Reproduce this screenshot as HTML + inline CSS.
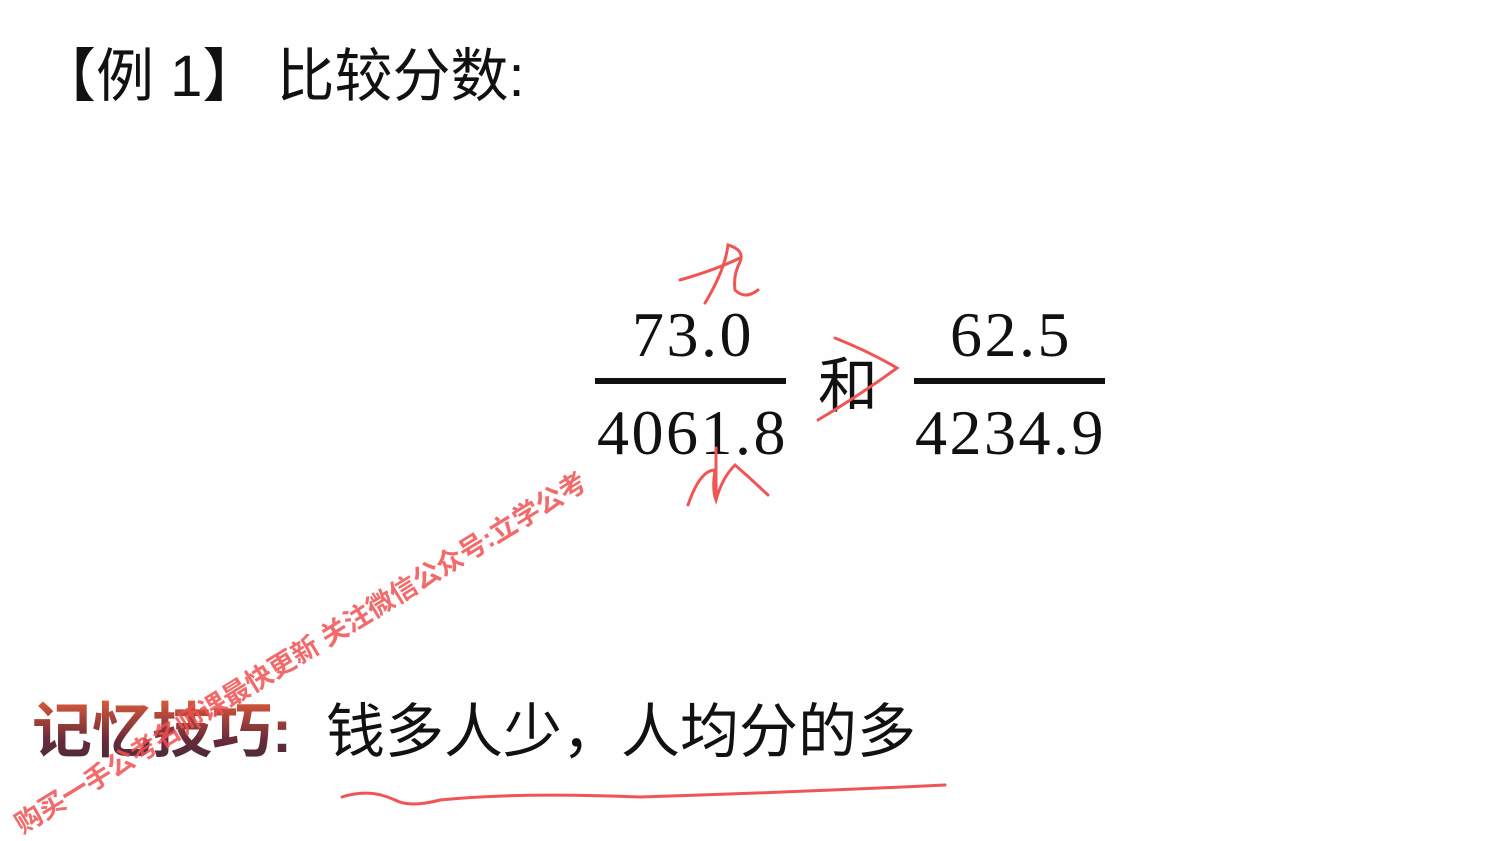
<!DOCTYPE html>
<html><head><meta charset="utf-8"><style>
html,body{margin:0;padding:0;width:1501px;height:841px;background:#fefefe;overflow:hidden;position:relative}
.t{position:absolute;white-space:nowrap;font-family:"Liberation Sans","Noto Sans CJK SC",sans-serif;color:#111}
.n{position:absolute;white-space:nowrap;font-family:"Liberation Serif","DejaVu Serif",serif;color:#111;font-size:64px;line-height:1;letter-spacing:2.5px}
.bar{position:absolute;height:6px;background:#111}
</style></head><body>
<div class="t" style="left:38px;top:42px;font-size:58px;line-height:70px">【例 1】 比较分数:</div>
<div class="n" style="left:632px;top:303px">73.0</div>
<div class="bar" style="left:595px;top:378px;width:191px"></div>
<div class="n" style="left:597px;top:401px">4061.8</div>
<div class="t" style="left:818px;top:352px;font-size:60px;line-height:70px">和</div>
<div class="n" style="left:950px;top:303px">62.5</div>
<div class="bar" style="left:914px;top:378px;width:191px"></div>
<div class="n" style="left:915px;top:401px">4234.9</div>
<div class="t" style="left:32px;top:695px;font-size:60px;line-height:74px;font-weight:bold;background:linear-gradient(#e8603a,#6a2a3a 60%,#3a2a3a);-webkit-background-clip:text;background-clip:text;color:transparent">记忆技巧:</div>
<div class="t" style="left:326px;top:695px;font-size:59px;line-height:74px">钱多人少，人均分的多</div>
<div class="t" style="font-size:27px;font-weight:bold;color:rgba(240,80,80,0.85);transform:rotate(-31.5deg);transform-origin:0 0;left:6px;top:808px">购买一手公考名师课最快更新 关注微信公众号:立学公考</div>
<svg width="1501" height="841" style="position:absolute;left:0;top:0" fill="none" stroke="#f05555" stroke-width="3" stroke-linecap="round">
<path d="M680 280 Q715 270 740 258"/>
<path d="M705 303 Q725 270 728 245 Q745 250 740 262 Q733 275 735 290 Q745 300 758 290"/>
<path d="M688 505 Q700 470 715 470 Q712 490 716 500 Q722 478 735 465 Q750 478 768 495"/>
<path d="M716 448 L716 500"/>
<path d="M835 338 Q870 352 897 368 Q860 395 818 420"/>
<path d="M342 797 Q370 788 395 800 Q410 808 440 800 Q520 792 640 797 Q800 792 945 785"/>
</svg>
</body></html>
